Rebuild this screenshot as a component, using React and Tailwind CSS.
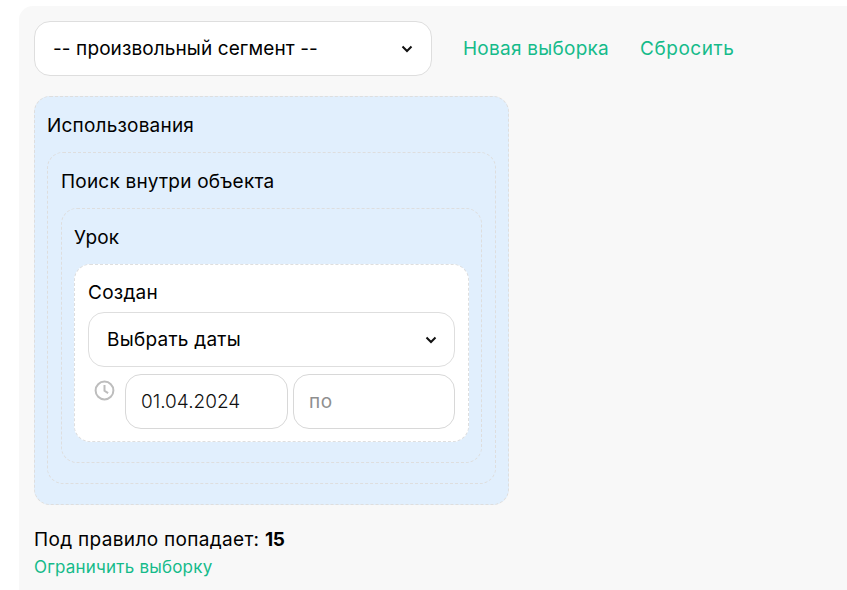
import React from "react";

const font = "font-['Inter','Noto_Sans',sans-serif]";

const Chevron = () => (
  <svg width="12" height="8" viewBox="0 0 12 8" fill="none" className="shrink-0">
    <path d="M1.5 1.5 6 6l4.5-4.5" stroke="#111" strokeWidth="2" />
  </svg>
);

const Clock = () => (
  <svg width="21" height="21" viewBox="0 0 21 21" fill="none" stroke="#bdbdbd" strokeWidth="2">
    <circle cx="10.5" cy="10.5" r="8.9" />
    <path d="M10.5 5v5.8l3.6 2.4" />
  </svg>
);

const Title = ({ children }) => (
  <div className="mb-[10px] pt-[1px] text-[19px] leading-[32px] tracking-[0.2px] text-black">{children}</div>
);

const App = () => {
  return (
    <div className={`h-[590px] overflow-hidden bg-white pt-[6px] pl-[19px] ${font}`}>
      <div className="h-[584px] rounded-tl-[14px] bg-[#f8f8f8] pl-[15px] pt-[15px]">
        <div className="flex items-center">
          <div className="flex h-[55px] w-[398px] items-center justify-between rounded-[16px] border border-[#dedede] bg-white pl-[18px] pr-[18px] text-[19px] tracking-[0.1px] text-black">
            <span className="pt-[2px]">-- произвольный сегмент --</span>
            <Chevron />
          </div>
          <a className="ml-[31px] pt-[2px] text-[19px] tracking-[0.25px] text-[#15bb8a]">Новая выборка</a>
          <a className="ml-[31px] pt-[2px] text-[19px] tracking-[0.55px] text-[#15bb8a]">Сбросить</a>
        </div>

        <div className="mt-[20px] w-[475px] rounded-[16px] border border-dashed border-[#dedede] bg-[#e1effd] pl-[12px] pr-[12.5px] pt-[12px] pb-[20px]">
          <Title>Использования</Title>
          <div className="rounded-[16px] border border-dashed border-[#dedede] pl-[13px] pr-[12.5px] pt-[12px] pb-[20px]">
            <Title>Поиск внутри объекта</Title>
            <div className="rounded-[16px] border border-dashed border-[#dedede] pl-[12px] pr-[12.5px] pt-[12px] pb-[20px]">
              <Title>Урок</Title>
              <div className="rounded-[16px] border border-dashed border-[#dedede] bg-white pl-[13px] pr-[12.5px] py-[12px]">
                <div className="mb-[4px] pt-[1px] text-[19px] leading-[30px] tracking-[0.25px] text-black">Создан</div>
                <div className="flex h-[55px] items-center justify-between rounded-[16px] border border-[#dedede] bg-white pl-[18px] pr-[17px] text-[19px] tracking-[0.25px] text-black">
                  <span className="pt-[2px]">Выбрать даты</span>
                  <Chevron />
                </div>
                <div className="mt-[7px] flex gap-[5px]">
                  <div className="flex w-[32px] shrink-0 justify-center pt-[6px]">
                    <Clock />
                  </div>
                  <div className="flex h-[55px] w-[163px] items-center rounded-[16px] border border-[#d8d8d8] px-[15px] text-[19px] font-light text-[#111]">
                    <span className="pt-[2px]">01.04.2024</span>
                  </div>
                  <div className="flex h-[55px] w-[162px] items-center rounded-[16px] border border-[#d8d8d8] px-[15px] text-[19px] tracking-[0.5px] text-[#8f8f8f]">
                    <span className="pt-[2px]">по</span>
                  </div>
                </div>
              </div>
            </div>
          </div>
        </div>

        <div className="mt-[21px] text-[19px] leading-[28px] tracking-[0.33px] text-black">
          Под правило попадает: <b className="font-bold tracking-[-0.5px]">15</b>
        </div>
        <a className="block text-[17px] leading-[26px] tracking-[0.2px] text-[#15bb8a]">Ограничить выборку</a>
      </div>
    </div>
  );
};

export default App;
